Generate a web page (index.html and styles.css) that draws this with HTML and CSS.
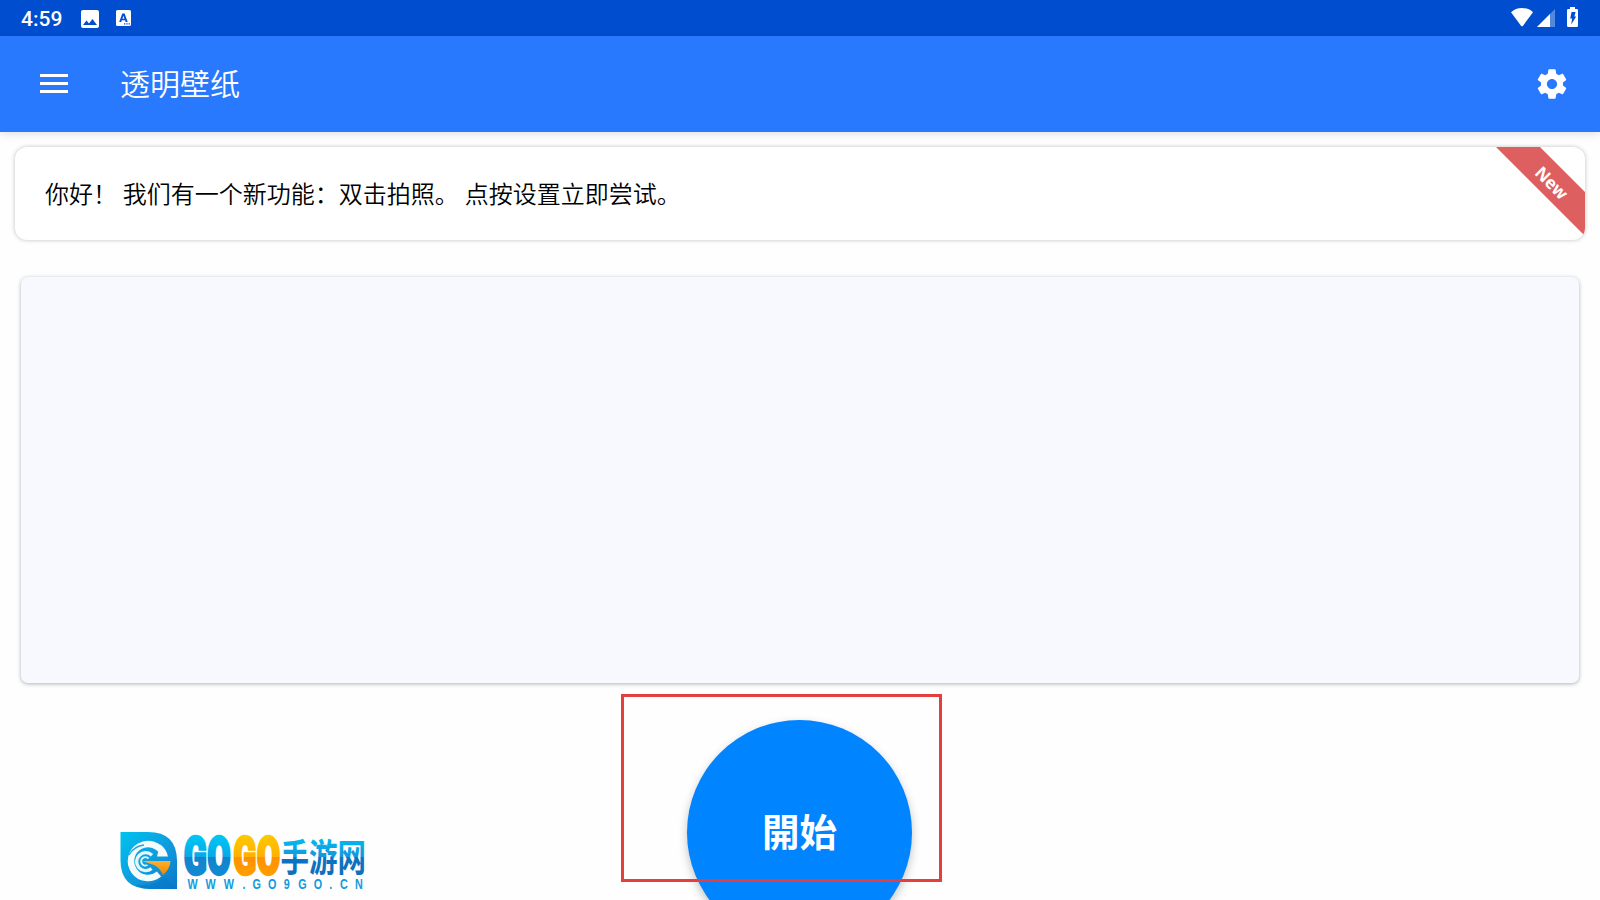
FILE: index.html
```html
<!DOCTYPE html>
<html lang="zh-CN">
<head>
<meta charset="utf-8">
<title>透明壁纸</title>
<link rel="stylesheet" href="styles.css">
</head>
<body>
<div class="screen">
  <div class="status">
    <span class="clock">4:59</span>
    <svg class="st-photo" width="18" height="18" viewBox="3 3 18 18"><path fill="#fff" d="M21 19V5c0-1.100-.9-2-2-2H5c-1.100 0-2 .9-2 2v14c0 1.100.9 2 2 2h14c1.100 0 2-.9 2-2zM8.500 13.500l2.500 3.010L14.500 12l4.500 6H5l3.500-4.500z"/></svg>
    <svg class="st-lang" width="15" height="16" viewBox="0 0 15 16"><path fill="#fff" fill-rule="evenodd" d="M1.500 0h12Q15 0 15 1.500v13q0 1.500-1.500 1.500h-12Q0 16 0 14.500v-13Q0 0 1.500 0zM6.300 3.500L3.200 12h2l.6-1.700h3.300l.6 1.700h2L8.600 3.500zM7.450 5.700l1.050 3.100H6.400zM8 13.300v1.200h1.300v-1.200zm2.300 0v1.200h1.300v-1.200zm2.300 0v1.200h1.300v-1.200z"/></svg>
    <div class="st-right">
      <svg width="22" height="19" viewBox="0 0 22 19"><path fill="#fff" d="M0 4.300Q4.500 0 11 0t11 4.300L12 17.700q-1 1.200-2 0z"/></svg>
      <svg class="st-signal" width="18" height="18" viewBox="0 0 18 18"><path fill="#fff" fill-opacity=".33" d="M18 0v18H0z"/><path fill="#fff" d="M13 5v13H0z"/></svg>
      <svg class="st-batt" width="11" height="20" viewBox="0 0 11 20"><path fill="#fff" fill-rule="evenodd" d="M3 0h5v2h1.700Q11 2 11 3.300v15.400Q11 20 9.700 20H1.300Q0 20 0 18.700V3.300Q0 2 1.300 2H3zM4.600 5h4L7.400 9.500H9.200L4.200 17.500l.9-6H3.200z"/></svg>
    </div>
  </div>
  <header class="appbar">
    <svg class="menu" width="28" height="20" viewBox="0 0 28 20"><path fill="#fff" d="M0 0h28v3H0zM0 8h28v3H0zM0 16h28v3H0z"/></svg>
    <h1 class="title">透明壁纸</h1>
    <svg class="gear" width="36" height="36" viewBox="-.3 -.3 24.600 24.600"><path fill="#fff" d="M19.430 12.980c.04-.32.07-.64.07-.98s-.03-.66-.07-.98l2.110-1.650c.19-.15.24-.42.12-.64l-2-3.460c-.12-.22-.39-.3-.61-.22l-2.490 1c-.52-.4-1.080-.73-1.690-.98l-.38-2.650C14.460 2.180 14.250 2 14 2h-4c-.25 0-.46.18-.49.42l-.38 2.650c-.61.25-1.170.59-1.690.98l-2.490-1c-.23-.09-.49 0-.61.22l-2 3.460c-.13.22-.07.49.12.64l2.110 1.650c-.04.32-.07.65-.07.98s.03.66.07.98l-2.110 1.650c-.19.15-.24.42-.12.64l2 3.460c.12.22.39.3.61.22l2.490-1c.52.4 1.080.73 1.690.98l.38 2.650c.03.24.24.42.49.42h4c.25 0 .46-.18.49-.42l.38-2.650c.61-.25 1.170-.59 1.690-.98l2.490 1c.23.09.49 0 .61-.22l2-3.460c.12-.22.07-.49-.12-.64l-2.110-1.650zM12 15.500c-1.930 0-3.500-1.570-3.500-3.500s1.570-3.500 3.500-3.500 3.500 1.570 3.500 3.500-1.570 3.500-3.500 3.500z"/></svg>
  </header>
  <main class="content">
    <section class="notice">
      <p class="message">你好！ 我们有一个新功能：双击拍照。 点按设置立即尝试。</p>
      <svg class="ribbon" width="89" height="93" viewBox="0 0 89 93"><path fill="#de5f5f" d="M0 0h44l45 45v44z"/><text class="new" transform="translate(55.500 36) rotate(45)" y="6" text-anchor="middle">New</text></svg>
    </section>
    <section class="panel"></section>
    <div class="actions">
      <svg class="logo" width="250" height="62" viewBox="118 830 250 62">
        <defs>
          <linearGradient id="tile" x1="0" y1="0" x2="1" y2="1"><stop offset="0" stop-color="#00c3ee"/><stop offset=".6" stop-color="#1096dc"/><stop offset="1" stop-color="#0878c8"/></linearGradient>
          <linearGradient id="cyan" gradientUnits="userSpaceOnUse" x1="0" y1="-38" x2="0" y2="2"><stop offset="0" stop-color="#00c6f5"/><stop offset=".52" stop-color="#08a8e6"/><stop offset=".53" stop-color="#1183cc"/><stop offset="1" stop-color="#128bd3"/></linearGradient>
          <linearGradient id="gold" gradientUnits="userSpaceOnUse" x1="0" y1="-38" x2="0" y2="2"><stop offset="0" stop-color="#ffc800"/><stop offset=".52" stop-color="#ffb000"/><stop offset=".53" stop-color="#ff9000"/><stop offset="1" stop-color="#ffa000"/></linearGradient>
          <linearGradient id="han" gradientUnits="userSpaceOnUse" x1="0" y1="-33" x2="0" y2="5"><stop offset="0" stop-color="#00baf0"/><stop offset=".5" stop-color="#1497dc"/><stop offset=".51" stop-color="#0b73c2"/><stop offset="1" stop-color="#0c70be"/></linearGradient>
          <linearGradient id="wedge" x1="0" y1="0" x2="0" y2="1"><stop offset="0" stop-color="#ffb030"/><stop offset="1" stop-color="#ee8500"/></linearGradient>
        </defs>
        <path fill="url(#tile)" d="M120.500 832H148Q177 832 177 861v28h-27q-29.500 0-29.500-29z"/>
        <path fill="#0878c8" opacity=".6" d="M165 876l12 13h-27q-8 0-14-4 18 2 29-9z"/>
        <path fill="none" stroke="#f3fbfc" stroke-width="6.500" d="M163.500 854A17 17 0 1 0 159 874"/>
        <path fill="#f3fbfc" d="M157 856.500h11q-2-8-8-12z"/>
        <path fill="none" stroke="#e2f6fb" stroke-width="3.400" d="M152 855.300A9 9 0 1 0 151.500 868.500"/>
        <path fill="none" stroke="#e2f6fb" stroke-width="2" d="M148.500 858.500A4.200 4.200 0 1 0 147.500 865"/>
        <path fill="none" stroke="#19a9dd" stroke-width="1.500" d="M129 855q5-9 15-10"/>
        <path fill="url(#wedge)" d="M142 861h28.500q-.5 8-7.500 14-3-7-9-10z"/>
        <g class="word">
          <text fill="url(#cyan)" stroke="url(#cyan)" transform="translate(184 874) scale(.65 1)" x="0 36">GO</text>
          <text fill="url(#gold)" stroke="url(#gold)" transform="translate(233.500 874) scale(.65 1)" x="0 36">GO</text>
        </g>
        <text class="han" fill="url(#han)" transform="translate(280.500 871) scale(.75 1)">手游网</text>
        <text class="url" transform="translate(187.500 889) scale(.77 1)" x="0 23.500 47 71.500 84.500 104.500 125 144 164 184 198 217.500">WWW.GO9GO.CN</text>
      </svg>
      <button class="start"><span class="start-label">開始</span></button>
      <div class="highlight"></div>
    </div>
  </main>
</div>
</body>
</html>
```
FILE: styles.css
```css
* { box-sizing: border-box; margin: 0; padding: 0; }
body { background: #fefefe; overflow: hidden; font-family: Roboto, "Noto Sans CJK SC", sans-serif; }
.screen { display: flex; flex-direction: column; width: 1600px; height: 900px; overflow: hidden; }
.status { display: flex; align-items: center; flex: none; height: 36px; padding: 0 21px; background: #004ecf; color: #fff; }
.clock { width: 60px; font-size: 21px; font-weight: 500; line-height: 36px; padding-top: 1px; }
.st-photo { margin-top: 1px; }
.st-lang { margin-left: 17px; }
.st-right { display: flex; align-items: flex-end; height: 20px; margin: -2px 0 0 auto; }
.st-signal { margin-left: 4px; }
.st-batt { margin: 0 1px 0 12px; }
.appbar { display: flex; align-items: center; flex: none; height: 96px; padding: 0 30px 0 40px; background: #2979ff; color: #fff; box-shadow: 0 2px 8px rgba(0, 0, 0, .12); }
.title { flex: 1; margin-left: 52px; padding-top: 2px; font-size: 30px; font-weight: 350; line-height: 44px; }
.content { display: flex; flex-direction: column; flex: 1; padding-top: 15px; }
.notice { position: relative; flex: none; height: 93px; margin: 0 15px; padding: 30px; overflow: hidden; border-radius: 12px; background: #fff; box-shadow: 0 0 4px rgba(0, 0, 0, .25); }
.message { font-size: 24px; font-weight: 350; line-height: 36px; color: #000; }
.ribbon { position: absolute; top: 0; right: 0; }
.new { fill: #fff; font-family: "Noto Sans", sans-serif; font-size: 17px; font-weight: 700; }
.panel { flex: none; height: 406px; margin: 37px 21px 0; border-radius: 7px; background: #f8f9fe; box-shadow: 0 1px 4px rgba(0, 0, 0, .3); }
.actions { position: relative; display: flex; justify-content: center; height: 217px; padding: 37px 2px 0 0; }
.start { flex: none; width: 225px; height: 225px; padding: 0 0 5px 1px; border: 0; border-radius: 50%; background: #0084ff; color: #fff; font: 700 37.500px/1 "Noto Sans CJK TC", sans-serif; box-shadow: 0 4px 10px rgba(0, 0, 0, .24); }
.highlight { position: absolute; left: 621px; top: 11px; width: 321px; height: 188px; border: 3px solid #e53e3e; }
.logo { position: absolute; left: 118px; top: 147px; overflow: visible; }
.word { font: 900 51px Roboto, sans-serif; stroke-width: 3.500px; }
.han { font: 700 38px "Noto Sans CJK SC", sans-serif; }
.url { font: 700 14px "Liberation Sans", sans-serif; fill: #139ade; }
```
